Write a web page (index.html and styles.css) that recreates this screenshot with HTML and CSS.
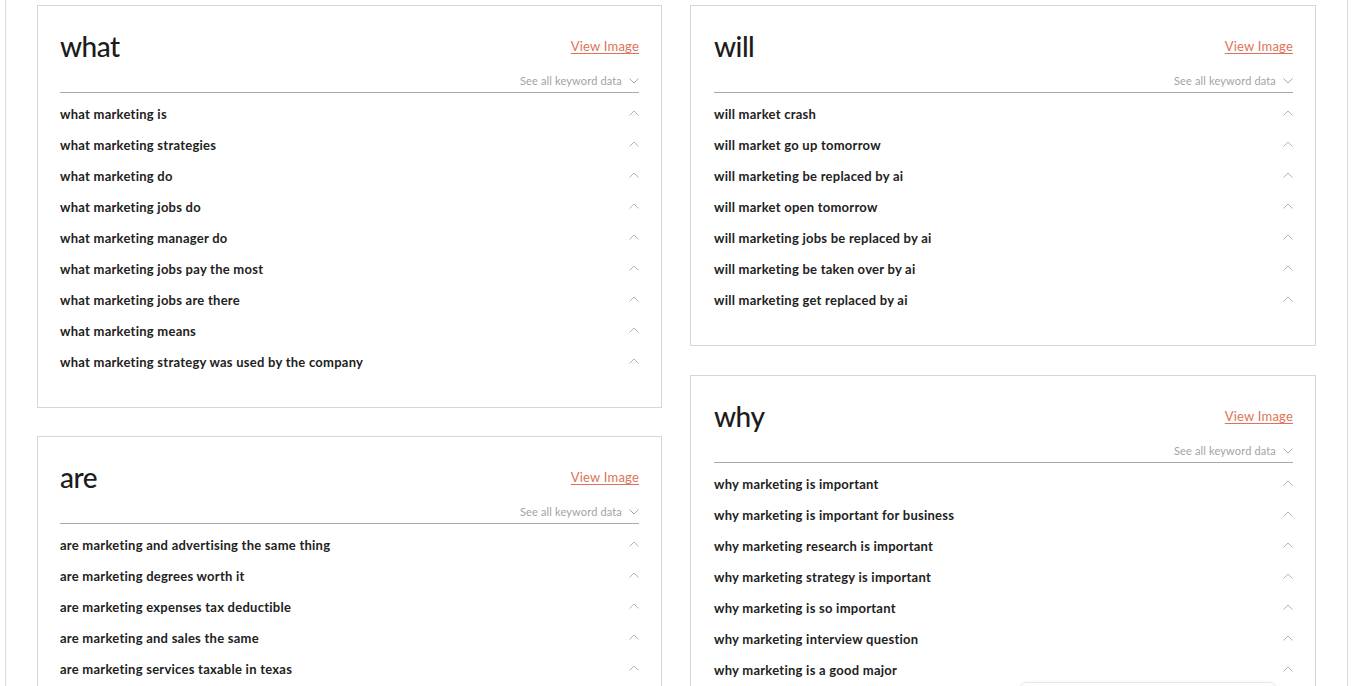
FILE: index.html
```html
<!DOCTYPE html>
<html>
<head>
<meta charset="utf-8">
<link rel="stylesheet" href="styles.css">
</head>
<body>
<div class="wrap">
  <div class="col col-left">
    <section class="card">
      <div class="head"><h2>what</h2><a class="view" href="#">View Image</a></div>
      <div class="see"><span>See all keyword data</span><svg class="chev" viewBox="0 0 10 6"><path d="M0.5 0.5 L5 5 L9.5 0.5"/></svg></div>
      <ul class="rows">
        <li><span>what marketing is</span><svg class="up" viewBox="0 0 10 6"><path d="M0.5 5.5 L5 1 L9.5 5.5"/></svg></li>
        <li><span>what marketing strategies</span><svg class="up" viewBox="0 0 10 6"><path d="M0.5 5.5 L5 1 L9.5 5.5"/></svg></li>
        <li><span>what marketing do</span><svg class="up" viewBox="0 0 10 6"><path d="M0.5 5.5 L5 1 L9.5 5.5"/></svg></li>
        <li><span>what marketing jobs do</span><svg class="up" viewBox="0 0 10 6"><path d="M0.5 5.5 L5 1 L9.5 5.5"/></svg></li>
        <li><span>what marketing manager do</span><svg class="up" viewBox="0 0 10 6"><path d="M0.5 5.5 L5 1 L9.5 5.5"/></svg></li>
        <li><span>what marketing jobs pay the most</span><svg class="up" viewBox="0 0 10 6"><path d="M0.5 5.5 L5 1 L9.5 5.5"/></svg></li>
        <li><span>what marketing jobs are there</span><svg class="up" viewBox="0 0 10 6"><path d="M0.5 5.5 L5 1 L9.5 5.5"/></svg></li>
        <li><span>what marketing means</span><svg class="up" viewBox="0 0 10 6"><path d="M0.5 5.5 L5 1 L9.5 5.5"/></svg></li>
        <li><span>what marketing strategy was used by the company</span><svg class="up" viewBox="0 0 10 6"><path d="M0.5 5.5 L5 1 L9.5 5.5"/></svg></li>
      </ul>
    </section>
    <section class="card">
      <div class="head"><h2>are</h2><a class="view" href="#">View Image</a></div>
      <div class="see"><span>See all keyword data</span><svg class="chev" viewBox="0 0 10 6"><path d="M0.5 0.5 L5 5 L9.5 0.5"/></svg></div>
      <ul class="rows">
        <li><span>are marketing and advertising the same thing</span><svg class="up" viewBox="0 0 10 6"><path d="M0.5 5.5 L5 1 L9.5 5.5"/></svg></li>
        <li><span>are marketing degrees worth it</span><svg class="up" viewBox="0 0 10 6"><path d="M0.5 5.5 L5 1 L9.5 5.5"/></svg></li>
        <li><span>are marketing expenses tax deductible</span><svg class="up" viewBox="0 0 10 6"><path d="M0.5 5.5 L5 1 L9.5 5.5"/></svg></li>
        <li><span>are marketing and sales the same</span><svg class="up" viewBox="0 0 10 6"><path d="M0.5 5.5 L5 1 L9.5 5.5"/></svg></li>
        <li><span>are marketing services taxable in texas</span><svg class="up" viewBox="0 0 10 6"><path d="M0.5 5.5 L5 1 L9.5 5.5"/></svg></li>
      </ul>
    </section>
  </div>
  <div class="col col-right">
    <section class="card">
      <div class="head"><h2>will</h2><a class="view" href="#">View Image</a></div>
      <div class="see"><span>See all keyword data</span><svg class="chev" viewBox="0 0 10 6"><path d="M0.5 0.5 L5 5 L9.5 0.5"/></svg></div>
      <ul class="rows">
        <li><span>will market crash</span><svg class="up" viewBox="0 0 10 6"><path d="M0.5 5.5 L5 1 L9.5 5.5"/></svg></li>
        <li><span>will market go up tomorrow</span><svg class="up" viewBox="0 0 10 6"><path d="M0.5 5.5 L5 1 L9.5 5.5"/></svg></li>
        <li><span>will marketing be replaced by ai</span><svg class="up" viewBox="0 0 10 6"><path d="M0.5 5.5 L5 1 L9.5 5.5"/></svg></li>
        <li><span>will market open tomorrow</span><svg class="up" viewBox="0 0 10 6"><path d="M0.5 5.5 L5 1 L9.5 5.5"/></svg></li>
        <li><span>will marketing jobs be replaced by ai</span><svg class="up" viewBox="0 0 10 6"><path d="M0.5 5.5 L5 1 L9.5 5.5"/></svg></li>
        <li><span>will marketing be taken over by ai</span><svg class="up" viewBox="0 0 10 6"><path d="M0.5 5.5 L5 1 L9.5 5.5"/></svg></li>
        <li><span>will marketing get replaced by ai</span><svg class="up" viewBox="0 0 10 6"><path d="M0.5 5.5 L5 1 L9.5 5.5"/></svg></li>
      </ul>
    </section>
    <section class="card">
      <div class="head"><h2>why</h2><a class="view" href="#">View Image</a></div>
      <div class="see"><span>See all keyword data</span><svg class="chev" viewBox="0 0 10 6"><path d="M0.5 0.5 L5 5 L9.5 0.5"/></svg></div>
      <ul class="rows">
        <li><span>why marketing is important</span><svg class="up" viewBox="0 0 10 6"><path d="M0.5 5.5 L5 1 L9.5 5.5"/></svg></li>
        <li><span>why marketing is important for business</span><svg class="up" viewBox="0 0 10 6"><path d="M0.5 5.5 L5 1 L9.5 5.5"/></svg></li>
        <li><span>why marketing research is important</span><svg class="up" viewBox="0 0 10 6"><path d="M0.5 5.5 L5 1 L9.5 5.5"/></svg></li>
        <li><span>why marketing strategy is important</span><svg class="up" viewBox="0 0 10 6"><path d="M0.5 5.5 L5 1 L9.5 5.5"/></svg></li>
        <li><span>why marketing is so important</span><svg class="up" viewBox="0 0 10 6"><path d="M0.5 5.5 L5 1 L9.5 5.5"/></svg></li>
        <li><span>why marketing interview question</span><svg class="up" viewBox="0 0 10 6"><path d="M0.5 5.5 L5 1 L9.5 5.5"/></svg></li>
        <li><span>why marketing is a good major</span><svg class="up" viewBox="0 0 10 6"><path d="M0.5 5.5 L5 1 L9.5 5.5"/></svg></li>
      </ul>
    </section>
  </div>
</div>
<div class="toast"></div>
</body>
</html>
```

FILE: styles.css
```css
html, body {
  margin: 0;
  padding: 0;
  background: #fff;
  height: 686px;
  overflow: hidden;
}
body {
  font-family: "Lato", "Liberation Sans", sans-serif;
  color: #222;
}
.wrap {
  margin: 0 6px 0 5px;
  border-left: 1px solid #dcdcdc;
  border-right: 1px solid #dcdcdc;
  padding: 5px 31px 0 31px;
  display: grid;
  grid-template-columns: 625px 1fr;
  column-gap: 28px;
  align-items: start;
  min-height: 700px;
}
.col {
  display: flex;
  flex-direction: column;
  gap: 29px;
}
.col-left {
  gap: 28px;
}
.card {
  border: 1px solid #d6d6d6;
  padding: 25px 22px 30px 22px;
  background: #fff;
}
.col-right .card {
  padding-left: 23px;
}
.head {
  display: flex;
  justify-content: space-between;
  align-items: center;
  height: 32px;
}
h2 {
  margin: -2px 0 0 0;
  font-size: 28px;
  font-weight: 500;
  letter-spacing: -0.5px;
  color: #1c1c1c;
  line-height: 32px;
}
.view {
  font-size: 13px;
  letter-spacing: 0.2px;
  color: #e07257;
  text-decoration: underline;
  text-underline-offset: 2px;
  text-decoration-thickness: 1px;
  margin-top: -2px;
}
.see {
  margin-top: 9px;
  display: flex;
  justify-content: flex-end;
  align-items: center;
  gap: 7px;
  height: 16px;
  padding-bottom: 4px;
  border-bottom: 1px solid #a8a8a8;
  font-size: 11px;
  letter-spacing: 0.15px;
  color: #a3a3a3;
}
.chev {
  width: 10px;
  height: 6px;
  margin-top: 2px;
  fill: none;
  stroke: #a8a8a8;
  stroke-width: 1;
}
.rows {
  list-style: none;
  margin: 5px 0 0 0;
  padding: 0;
}
.rows li {
  height: 31px;
  display: flex;
  justify-content: space-between;
  align-items: center;
  font-size: 13px;
  font-weight: 700;
  letter-spacing: 0.25px;
  color: #222;
}
.up {
  width: 10px;
  height: 6px;
  margin-top: -2px;
  fill: none;
  stroke: #b4b4b4;
  stroke-width: 1;
}
.toast {
  position: fixed;
  left: 1019px;
  top: 682px;
  width: 256px;
  height: 40px;
  border: 1px solid #e8e8e8;
  border-radius: 8px;
  background: #fff;
  box-shadow: 0 0 4px rgba(0,0,0,0.06);
}
```
